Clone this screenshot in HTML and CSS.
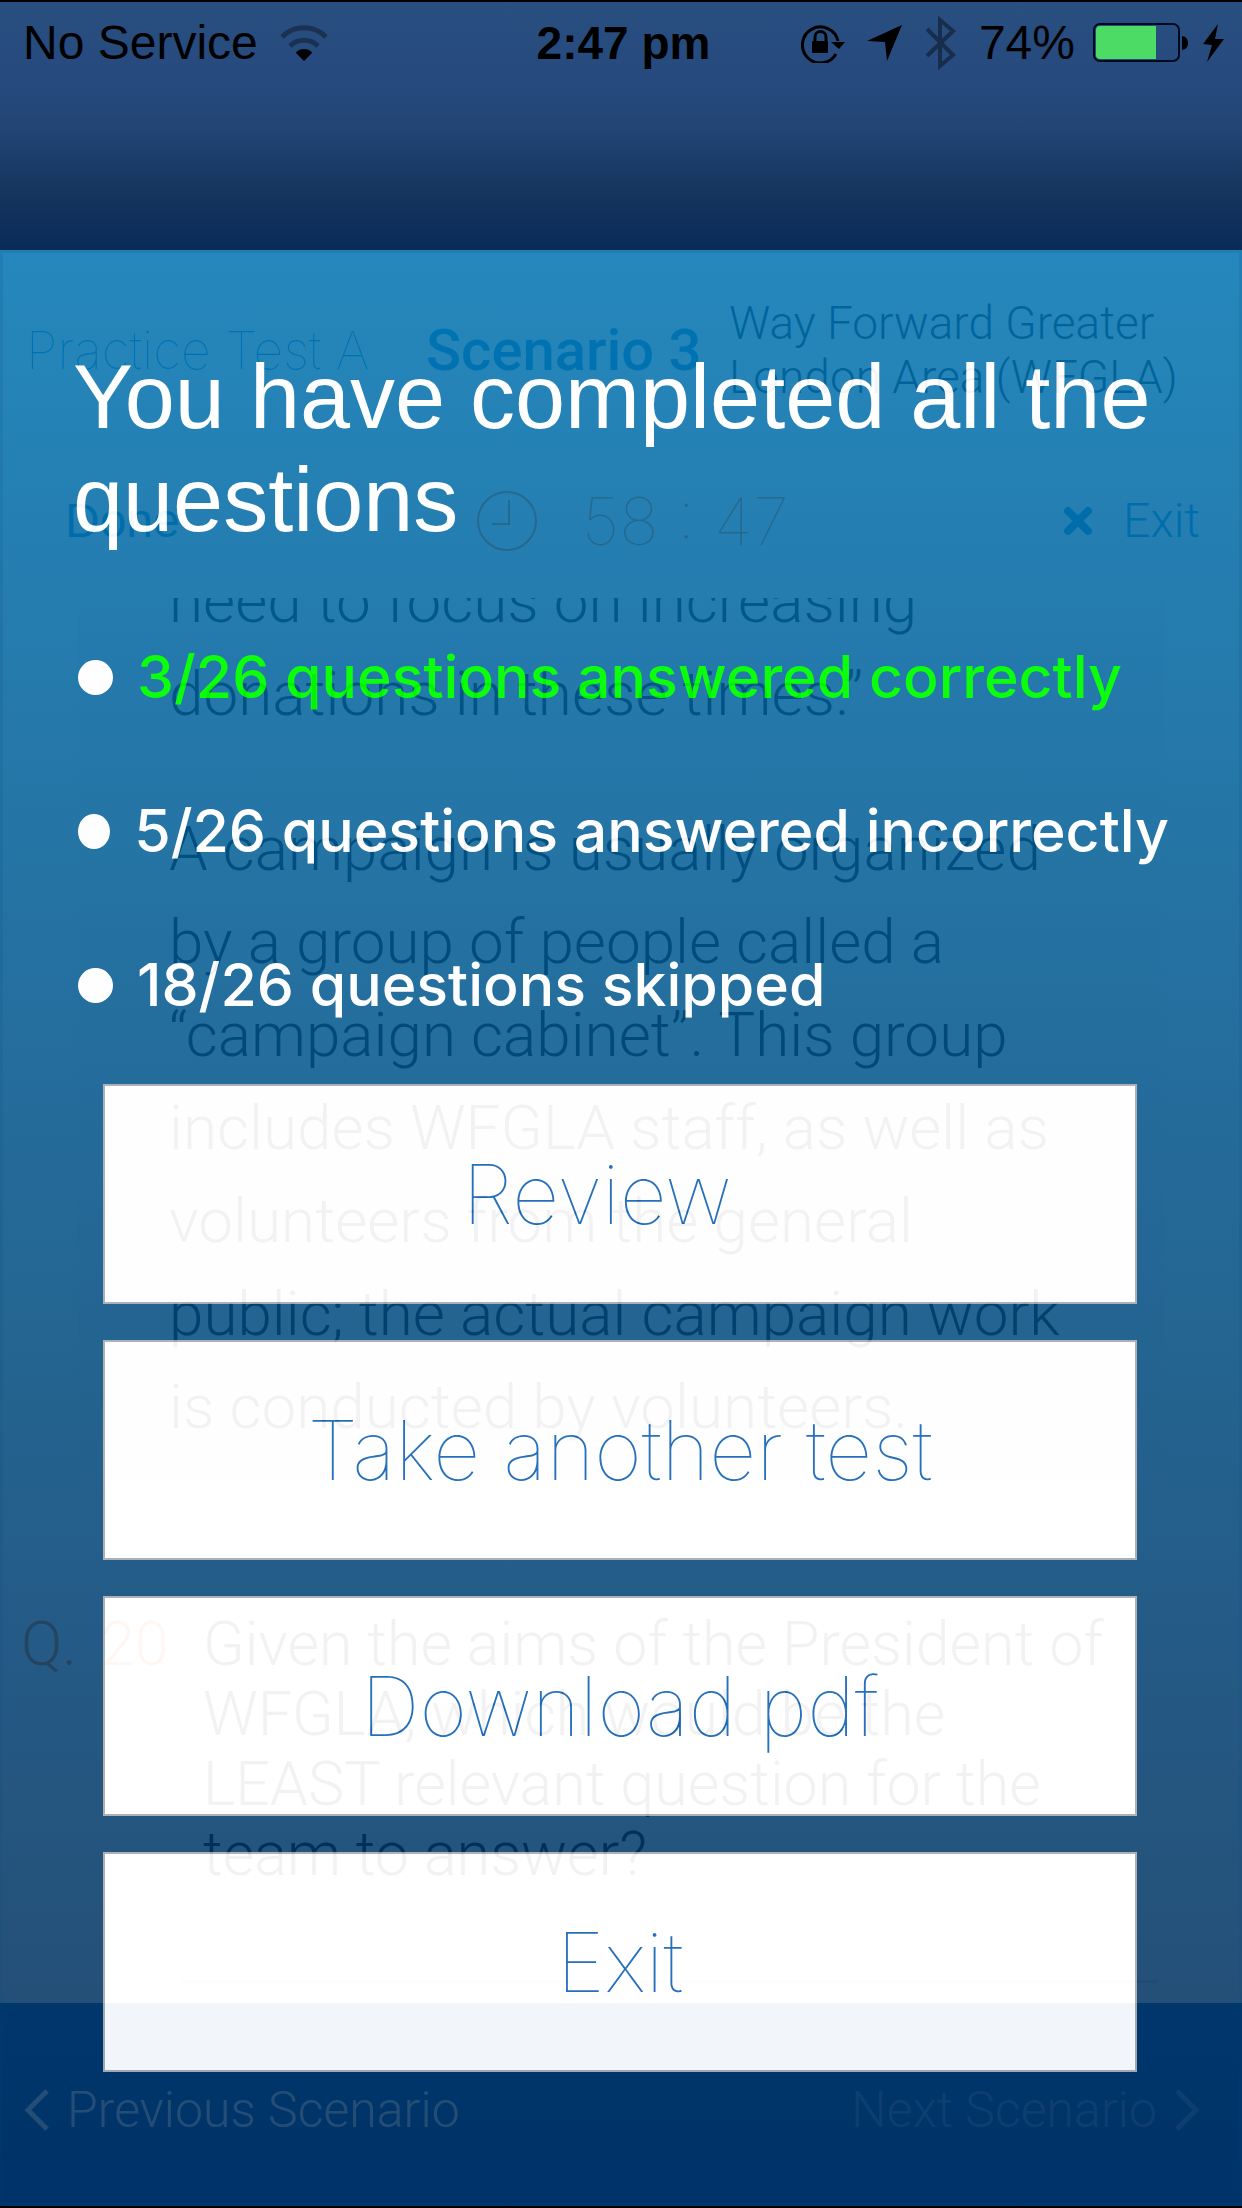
FILE: index.html
```html
<!DOCTYPE html>
<html lang="en">
<head>
<meta charset="utf-8">
<meta name="viewport" content="width=device-width, initial-scale=1">
<title>Practice Test A</title>
<link rel="stylesheet" href="styles.css">
</head>
<body>
<header class="top">
  <div class="status">
    <div class="status-left">
      <span>No Service</span>
      <svg class="icon" width="48" height="36" viewBox="0 0 48 36" aria-hidden="true">
        <g fill="none" stroke="#000" stroke-opacity=".35" stroke-width="5">
          <path d="M2 12A31 31 0 0 1 46 12"/>
          <path d="M10 21A20 20 0 0 1 38 21"/>
        </g>
        <path d="M24 36L16 28Q18 24 24 24T32 28Z"/>
      </svg>
    </div>
    <strong class="clock-time">2:47 pm</strong>
    <div class="status-right">
      <svg class="icon" width="44" height="40" viewBox="0 0 44 40" aria-hidden="true">
        <path d="M35 31A18 18 0 1 1 37 18" fill="none" stroke="#000" stroke-width="3"/>
        <path d="M30 19H44L38 26Z"/>
        <path d="M14 18V14A5.500 5.500 0 0 1 25 14V18" fill="none" stroke="#000" stroke-width="3"/>
        <rect x="11" y="18" width="16" height="12" rx="1"/>
      </svg>
      <svg class="icon" width="36" height="36" viewBox="0 0 36 36" aria-hidden="true"><path d="M35 0L20 36L18 17L0 16Z"/></svg>
      <svg class="icon" width="32" height="54" viewBox="0 0 32 54" aria-hidden="true"><path d="M2 13L28 39L15 50V4L28 15L2 40" fill="none" stroke="#000" stroke-opacity=".4" stroke-width="4"/></svg>
      <span>74%</span>
      <svg class="icon battery" width="96" height="40" viewBox="0 0 96 40" aria-hidden="true">
        <rect x="1" y="1" width="85" height="37" rx="6" fill="none" stroke="#000a1e" stroke-width="2"/>
        <path d="M7 3H63V36H7Q3 36 3 32V7Q3 3 7 3Z" fill="#4cdb64"/>
        <path d="M89 13Q95 14 95 20T89 27Z"/>
      </svg>
      <svg class="icon" width="21" height="38" viewBox="0 0 21 38" aria-hidden="true"><path d="M15 0L0 20L9 21L4 38L21 15L12 15Z"/></svg>
    </div>
  </div>
</header>

<div class="stage">
  <main class="test">
    <div class="heading">
      <span class="test-name">Practice Test A</span>
      <span class="scenario">Scenario 3</span>
      <span class="topic">Way Forward Greater<br>London Area (WFGLA)</span>
    </div>
    <div class="timer-bar">
      <a class="done" href="#done">Done</a>
      <div class="timer">
        <svg width="62" height="62" viewBox="0 0 62 62" fill="none" stroke="#ff6400" stroke-width="2" aria-hidden="true"><circle cx="31" cy="31" r="29"/><path d="M33 10V34H16"/></svg>
        <span>58 : 47</span>
      </div>
      <a class="quit" href="#exit">
        <svg width="30" height="30" viewBox="0 0 30 30" stroke="#0083c8" stroke-width="8" stroke-linecap="round" aria-hidden="true"><path d="M5 5L25 25M25 5L5 25"/></svg>
        Exit
      </a>
    </div>
    <section class="passage">
      <p>need to focus on increasing donations in these times.”</p>
      <p>A campaign is usually organized by a group of people called a “campaign cabinet”. This group includes WFGLA staff, as well as volunteers from the general public; the actual campaign work is conducted by volunteers.</p>
    </section>
    <section class="question">
      <div class="number"><span>Q.</span><span>20</span></div>
      <p>Given the aims of the President of WFGLA, which would be the LEAST relevant question for the team to answer?</p>
    </section>
    <hr class="rule">
    <nav class="pager">
      <a href="#previous">
        <svg width="26" height="42" viewBox="0 0 26 42" fill="none" stroke="#fff" stroke-width="5" aria-hidden="true"><path d="M23 2L4 21L23 40"/></svg>
        Previous Scenario
      </a>
      <a class="next" href="#next">
        Next Scenario
        <svg width="26" height="42" viewBox="0 0 26 42" fill="none" stroke="#fff" stroke-width="5" aria-hidden="true"><path d="M3 2L22 21L3 40"/></svg>
      </a>
    </nav>
  </main>

  <section class="results" role="dialog" aria-labelledby="results-title">
    <h1 id="results-title">You have completed all the questions</h1>
    <ul class="scores">
      <li class="correct">3/26 questions answered correctly</li>
      <li>5/26 questions answered incorrectly</li>
      <li>18/26 questions skipped</li>
    </ul>
    <div class="actions">
      <button type="button" class="review">Review</button>
      <button type="button">Take another test</button>
      <button type="button">Download pdf</button>
      <button type="button">Exit</button>
    </div>
  </section>
</div>
</body>
</html>
```
FILE: styles.css
```css
* {
  box-sizing: border-box;
}

body {
  display: flex;
  flex-direction: column;
  min-height: 100vh;
  margin: 0;
  border-top: 2px solid #000;
  border-bottom: 2px solid #000;
  background: #04386c;
  font-family: "Liberation Sans", Arial, sans-serif;
}

h1, p, ul {
  margin: 0;
}

a {
  color: inherit;
  text-decoration: none;
}

svg {
  display: block;
  flex: none;
}

/* Status bar */
.top {
  padding: 13px 18px 179px 23px;
  background: linear-gradient(#294e80, #264a7d 31%, #214474 52%, #16355f 76%, #092b58);
}

.status {
  display: grid;
  grid-template-columns: 1fr auto 1fr;
  align-items: center;
  font-size: 48px;
  line-height: 56px;
  white-space: nowrap;
}

.status-left,
.status-right {
  display: flex;
  align-items: center;
  gap: 22px;
}

.status-right {
  justify-content: flex-end;
}

.clock-time {
  font-size: 46px;
}

.battery {
  margin: 0 -8px 0 -4px;
}

/* The results sheet and the test share one grid cell, so the sheet covers the test */
.stage {
  display: grid;
  flex: 1;
}

.test,
.results {
  grid-area: 1 / 1;
  min-width: 0;
}

/* Test screen */
.test {
  display: flex;
  flex-direction: column;
  background: #fff;
  color: #000;
  font-family: Roboto, "Liberation Sans", sans-serif;
  font-weight: 300;
}

.heading {
  display: grid;
  grid-template-columns: 400fr 303fr 513fr;
  align-items: center;
  padding: 46px 0 29px 26px;
  white-space: nowrap;
}

.test-name {
  color: #0083c8;
  font-family: Inter, sans-serif;
  font-size: 52px;
  font-weight: 100;
}

.scenario {
  color: #0083c8;
  font-size: 58px;
  font-weight: 500;
}

.topic {
  color: #001a30;
  font-size: 46px;
  line-height: 54px;
}

.timer-bar {
  display: grid;
  grid-template-columns: 1fr auto 1fr;
  align-items: center;
  padding: 48px 42px 37px 65px;
  color: #0083c8;
  font-size: 48px;
  line-height: 80px;
}

.done {
  font-family: "Liberation Sans", sans-serif;
}

.timer {
  display: flex;
  align-items: center;
  gap: 44px;
  color: #ff6400;
  font-family: Inter, sans-serif;
  font-size: 66px;
  font-weight: 100;
}

.quit {
  display: flex;
  align-items: center;
  justify-content: flex-end;
  gap: 30px;
}

.passage {
  margin: 0 78px;
  padding: 0 94px 28px 91px;
  overflow: hidden;
  background: #fafafa;
  font-size: 62px;
  line-height: 93px;
}

/* Scrolled part-way through its first line */
.passage p:first-child {
  margin: -44px 0 62px;
}

.question {
  display: grid;
  grid-template-columns: 182px 1fr;
  padding: 128px 119px 0 21px;
  font-size: 61px;
  line-height: 70px;
}

.number {
  display: flex;
  gap: 24px;
  color: #ff6400;
}

.rule {
  width: auto;
  height: 3px;
  margin: 91px 84px 20px 181px;
  border: 0;
  background: #e4e4e4;
}

.pager {
  display: flex;
  flex: 1;
  align-items: flex-start;
  justify-content: space-between;
  padding: 77px 42px 66px 24px;
  background: #0055b4;
  color: #fff;
  font-size: 50px;
  line-height: 60px;
}

.pager a {
  display: flex;
  align-items: center;
  gap: 17px;
}

.pager .next {
  opacity: .4;
}

/* Results sheet */
.results {
  padding: 96px 73px;
  background: linear-gradient(rgba(1, 116, 178, .9), rgba(0, 50, 97, .9) 90%, rgba(0, 46, 92, .9));
  box-shadow: inset 0 0 0 3px rgba(0, 70, 120, .15);
  color: #fff;
  opacity: .95;
}

.results h1 {
  font-size: 90px;
  font-weight: 400;
  line-height: 103px;
}

.scores {
  display: flex;
  flex-direction: column;
  gap: 82px;
  margin: 89px 0 63px;
  padding: 0 0 0 5px;
  font-family: Inter, sans-serif;
  font-size: 59px;
  font-weight: 500;
  line-height: 72px;
  list-style: none;
  white-space: nowrap;
}

.scores li {
  display: flex;
  align-items: center;
  gap: 24px;
}

.scores li::before {
  width: 35px;
  height: 35px;
  border-radius: 50%;
  background: #fff;
  content: "";
}

.scores .correct {
  color: #0f0;
}

.actions {
  display: flex;
  flex-direction: column;
  gap: 36px;
  margin: 0 32px 0 30px;
}

.actions button {
  height: 220px;
  padding: 0;
  border: 2px solid #a9adb3;
  background: #fff;
  color: #1c69b8;
  font-family: Inter, sans-serif;
  font-size: 82px;
  font-weight: 100;
}

.actions .review {
  padding-right: 46px;
}
```
